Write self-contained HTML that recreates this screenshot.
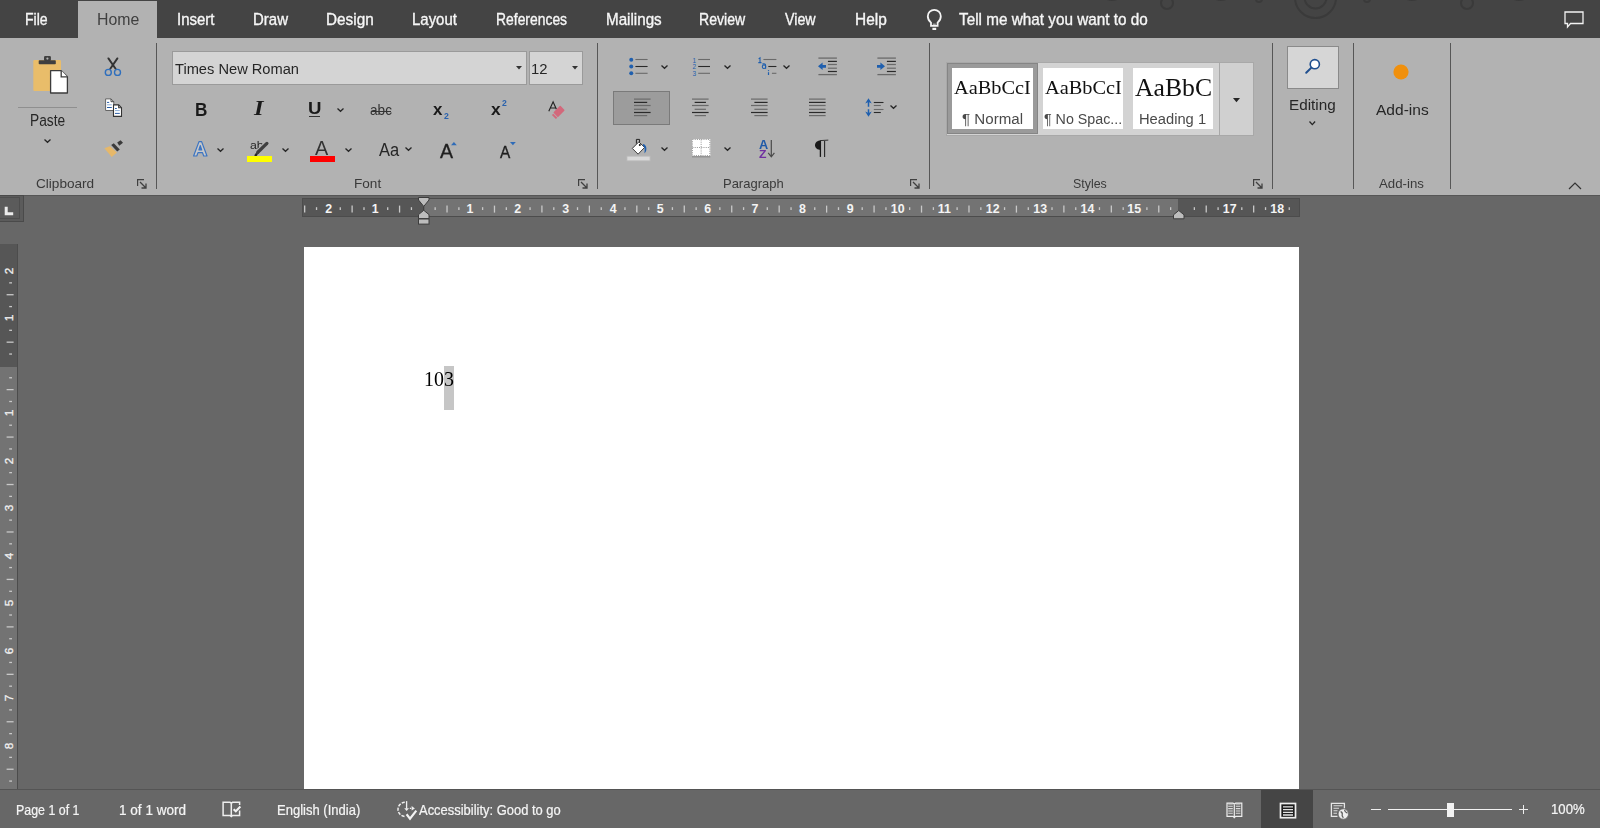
<!DOCTYPE html>
<html><head><meta charset="utf-8">
<style>
*{margin:0;padding:0;box-sizing:border-box}
html,body{width:1600px;height:828px;overflow:hidden;background:#676767;font-family:"Liberation Sans",sans-serif;position:relative}
.a{position:absolute;display:block}
svg.a{overflow:visible}
.t{position:absolute;white-space:nowrap;line-height:1}
</style></head><body>
<div class="a" style="left:0px;top:0px;width:1600px;height:38px;background:#444444"></div>
<svg class="a" style="left:1080px;top:0px;" width="460" height="30" viewBox="0 0 460 30"><circle cx="32" cy="-12" r="12" fill="none" stroke="#3a3a3a" stroke-width="2"/><circle cx="87" cy="3" r="6" fill="none" stroke="#3a3a3a" stroke-width="2"/><circle cx="141" cy="-12" r="12" fill="none" stroke="#3a3a3a" stroke-width="2"/><circle cx="179" cy="-1" r="3" fill="none" stroke="#3a3a3a" stroke-width="2"/><circle cx="235.5" cy="-2.5" r="20.5" fill="none" stroke="#3a3a3a" stroke-width="2"/><circle cx="235.5" cy="-2.5" r="11" fill="none" stroke="#3a3a3a" stroke-width="2"/><circle cx="287" cy="-1" r="3" fill="none" stroke="#3a3a3a" stroke-width="2"/><circle cx="332" cy="-12" r="12" fill="none" stroke="#3a3a3a" stroke-width="2"/><circle cx="387" cy="3" r="6" fill="none" stroke="#3a3a3a" stroke-width="2"/><circle cx="439" cy="-12" r="12" fill="none" stroke="#3a3a3a" stroke-width="2"/></svg>
<div class="a" style="left:78px;top:1px;width:79px;height:38px;background:#b2b2b2"></div>
<div class="t" id="tabFile" style="left:24.80px;top:12.41px;font-size:15.94px;color:#f6f6f6;font-family:'Liberation Sans',sans-serif;font-weight:normal;transform:scaleX(0.8824);transform-origin:0 0;-webkit-text-stroke:0.35px currentColor;">File</div>
<div class="t" id="tabHome" style="left:96.51px;top:12.41px;font-size:15.94px;color:#404040;font-family:'Liberation Sans',sans-serif;font-weight:normal;transform:scaleX(0.9949);transform-origin:0 0;">Home</div>
<div class="t" id="tabInsert" style="left:176.84px;top:12.41px;font-size:15.94px;color:#f6f6f6;font-family:'Liberation Sans',sans-serif;font-weight:normal;transform:scaleX(0.9400);transform-origin:0 0;-webkit-text-stroke:0.35px currentColor;">Insert</div>
<div class="t" id="tabDraw" style="left:253.02px;top:12.41px;font-size:15.94px;color:#f6f6f6;font-family:'Liberation Sans',sans-serif;font-weight:normal;transform:scaleX(0.9403);transform-origin:0 0;-webkit-text-stroke:0.35px currentColor;">Draw</div>
<div class="t" id="tabDesign" style="left:326.02px;top:12.41px;font-size:15.94px;color:#f6f6f6;font-family:'Liberation Sans',sans-serif;font-weight:normal;transform:scaleX(0.9623);transform-origin:0 0;-webkit-text-stroke:0.35px currentColor;">Design</div>
<div class="t" id="tabLayout" style="left:411.90px;top:12.41px;font-size:15.94px;color:#f6f6f6;font-family:'Liberation Sans',sans-serif;font-weight:normal;transform:scaleX(0.9383);transform-origin:0 0;-webkit-text-stroke:0.35px currentColor;">Layout</div>
<div class="t" id="tabReferences" style="left:495.52px;top:12.41px;font-size:15.94px;color:#f6f6f6;font-family:'Liberation Sans',sans-serif;font-weight:normal;transform:scaleX(0.8720);transform-origin:0 0;-webkit-text-stroke:0.35px currentColor;">References</div>
<div class="t" id="tabMailings" style="left:605.52px;top:12.41px;font-size:15.94px;color:#f6f6f6;font-family:'Liberation Sans',sans-serif;font-weight:normal;transform:scaleX(0.9529);transform-origin:0 0;-webkit-text-stroke:0.35px currentColor;">Mailings</div>
<div class="t" id="tabReview" style="left:699.22px;top:12.41px;font-size:15.94px;color:#f6f6f6;font-family:'Liberation Sans',sans-serif;font-weight:normal;transform:scaleX(0.8850);transform-origin:0 0;-webkit-text-stroke:0.35px currentColor;">Review</div>
<div class="t" id="tabView" style="left:784.71px;top:12.41px;font-size:15.94px;color:#f6f6f6;font-family:'Liberation Sans',sans-serif;font-weight:normal;transform:scaleX(0.8931);transform-origin:0 0;-webkit-text-stroke:0.35px currentColor;">View</div>
<div class="t" id="tabHelp" style="left:854.61px;top:12.41px;font-size:15.94px;color:#f6f6f6;font-family:'Liberation Sans',sans-serif;font-weight:normal;transform:scaleX(0.9698);transform-origin:0 0;-webkit-text-stroke:0.35px currentColor;">Help</div>
<div class="t" id="tell" style="left:958.92px;top:11.51px;font-size:15.94px;color:#f6f6f6;font-family:'Liberation Sans',sans-serif;font-weight:normal;transform:scaleX(0.9603);transform-origin:0 0;-webkit-text-stroke:0.35px currentColor;">Tell me what you want to do</div>
<svg class="a" style="left:926px;top:8px;" width="17" height="24" viewBox="0 0 17 24"><path d="M5,14.6 C2.9,12.9 1.8,10.6 1.8,8.2 C1.8,4.6 4.8,1.9 8.3,1.9 C11.8,1.9 14.8,4.6 14.8,8.2 C14.8,10.6 13.7,12.9 11.6,14.6 V17.8 H5 Z" fill="none" stroke="#f4f4f4" stroke-width="1.8"/><path d="M6.8,16.2 H9.8" stroke="#cfcfcf" stroke-width="1"/><path d="M6.4,20.9 H10.2" stroke="#f4f4f4" stroke-width="2.2"/></svg>
<svg class="a" style="left:1563.8px;top:11.2px;" width="20" height="17" viewBox="0 0 20 17"><path d="M1,1 H19 V12.5 H6.5 L3.5,16 V12.5 H1 Z" fill="none" stroke="#f2f2f2" stroke-width="1.3"/></svg>
<div class="a" style="left:0px;top:38px;width:1600px;height:157px;background:#b2b2b2"></div>
<div class="a" style="left:156px;top:43px;width:1px;height:146px;background:#575757"></div>
<div class="a" style="left:597px;top:43px;width:1px;height:146px;background:#575757"></div>
<div class="a" style="left:929px;top:43px;width:1px;height:146px;background:#575757"></div>
<div class="a" style="left:1272px;top:43px;width:1px;height:146px;background:#575757"></div>
<div class="a" style="left:1353px;top:43px;width:1px;height:146px;background:#575757"></div>
<div class="a" style="left:1450px;top:43px;width:1px;height:146px;background:#575757"></div>
<div class="t" id="lClip" style="left:35.56px;top:176.91px;font-size:13.33px;color:#3a3a3a;font-family:'Liberation Sans',sans-serif;font-weight:normal;transform:scaleX(1.0196);transform-origin:0 0;">Clipboard</div>
<div class="t" id="lFont" style="left:353.51px;top:176.91px;font-size:13.33px;color:#3a3a3a;font-family:'Liberation Sans',sans-serif;font-weight:normal;transform:scaleX(1.0182);transform-origin:0 0;">Font</div>
<div class="t" id="lPara" style="left:723.38px;top:176.91px;font-size:13.33px;color:#3a3a3a;font-family:'Liberation Sans',sans-serif;font-weight:normal;transform:scaleX(0.9736);transform-origin:0 0;">Paragraph</div>
<div class="t" id="lStyles" style="left:1072.75px;top:176.91px;font-size:13.33px;color:#3a3a3a;font-family:'Liberation Sans',sans-serif;font-weight:normal;transform:scaleX(0.9316);transform-origin:0 0;">Styles</div>
<div class="t" id="lAdd" style="left:1379.08px;top:176.91px;font-size:13.33px;color:#3a3a3a;font-family:'Liberation Sans',sans-serif;font-weight:normal;transform:scaleX(0.9936);transform-origin:0 0;">Add-ins</div>
<svg class="a" style="left:137px;top:179px;" width="10" height="10" viewBox="0 0 10 10"><path d="M0.6,7 V0.6 H7" fill="none" stroke="#404040" stroke-width="1.2"/><path d="M3,3 L9,9 M9,4.5 V9 H4.5" fill="none" stroke="#404040" stroke-width="1.3"/></svg>
<svg class="a" style="left:578px;top:179px;" width="10" height="10" viewBox="0 0 10 10"><path d="M0.6,7 V0.6 H7" fill="none" stroke="#404040" stroke-width="1.2"/><path d="M3,3 L9,9 M9,4.5 V9 H4.5" fill="none" stroke="#404040" stroke-width="1.3"/></svg>
<svg class="a" style="left:909.5px;top:179px;" width="10" height="10" viewBox="0 0 10 10"><path d="M0.6,7 V0.6 H7" fill="none" stroke="#404040" stroke-width="1.2"/><path d="M3,3 L9,9 M9,4.5 V9 H4.5" fill="none" stroke="#404040" stroke-width="1.3"/></svg>
<svg class="a" style="left:1253px;top:179px;" width="10" height="10" viewBox="0 0 10 10"><path d="M0.6,7 V0.6 H7" fill="none" stroke="#404040" stroke-width="1.2"/><path d="M3,3 L9,9 M9,4.5 V9 H4.5" fill="none" stroke="#404040" stroke-width="1.3"/></svg>
<svg class="a" style="left:1568px;top:182px;" width="14" height="8" viewBox="0 0 14 8"><polyline points="1,7 7,1 13,7" fill="none" stroke="#333" stroke-width="1.2"/></svg>
<svg class="a" style="left:28px;top:50px;" width="44" height="48" viewBox="0 0 44 48"><rect x="5.3" y="10" width="27.7" height="30.9" rx="1.2" fill="#e9bd6a"/><rect x="10.7" y="10.3" width="17.1" height="4" rx="0.8" fill="#3f3f3f"/><rect x="16" y="6" width="6.9" height="5" rx="1.2" fill="#3f3f3f"/><circle cx="19.4" cy="8.6" r="1.1" fill="#b3b3b3"/><path d="M22.6,20.6 H33.2 L39.4,26.8 V43 H22.6 Z" fill="#fff" stroke="#3c3c3c" stroke-width="1.3" stroke-linejoin="round"/><path d="M33.2,20.6 V26.8 H39.4" fill="#fff" stroke="#3c3c3c" stroke-width="1.3"/></svg>
<div class="a" style="left:18px;top:107px;width:59px;height:1px;background:#8f8f8f"></div>
<div class="t" id="paste" style="left:29.96px;top:112.75px;font-size:15.65px;color:#262626;font-family:'Liberation Sans',sans-serif;font-weight:normal;transform:scaleX(0.8776);transform-origin:0 0;">Paste</div>
<svg class="a" style="left:43px;top:137.5px;" width="9" height="5.5" viewBox="0 0 9 5.5"><polyline points="1.5,1.5 4.5,4.3 7.5,1.5" fill="none" stroke="#262626" stroke-width="1.3"/></svg>
<svg class="a" style="left:100px;top:52px;" width="28" height="28" viewBox="0 0 28 28"><path d="M8.4,6.4 L15.6,16.8" stroke="#333" stroke-width="1.9" stroke-linecap="round"/><path d="M17.4,6.4 L10.3,16.8" stroke="#333" stroke-width="1.9" stroke-linecap="round"/><circle cx="8.3" cy="20.4" r="3" fill="none" stroke="#2f6fbd" stroke-width="1.4"/><circle cx="17.5" cy="20.4" r="3" fill="none" stroke="#2f6fbd" stroke-width="1.4"/></svg>
<svg class="a" style="left:100px;top:94px;" width="28" height="28" viewBox="0 0 28 28"><path d="M5.6,4.9 H11 L13.8,7.7 V16.5 H5.6 Z" fill="#fff" stroke="#666" stroke-width="1"/><path d="M11,4.9 V7.7 H13.8" fill="none" stroke="#444" stroke-width="1"/><path d="M7,8.4 H9.2 M7,13.5 H11.8" stroke="#2a5fa8" stroke-width="1"/><path d="M7,10.8 H11.8" stroke="#8fb0d8" stroke-width="1"/><path d="M13.5,10.9 H18.7 L21.5,13.7 V22.4 H13.5 Z" fill="#fff" stroke="#333" stroke-width="1.1"/><path d="M18.7,10.9 V13.7 H21.5" fill="none" stroke="#333" stroke-width="1.1"/><path d="M15,14.5 H16.8 M15,19.4 H19.8" stroke="#2a5fa8" stroke-width="1"/><path d="M15,16.6 H19.8" stroke="#8fb0d8" stroke-width="1"/></svg>
<svg class="a" style="left:100px;top:134px;" width="28" height="28" viewBox="0 0 28 28"><polygon points="4.4,14.2 9.8,12.2 16.9,18.4 11.7,23" fill="#e6b86a"/><polygon points="11.2,10.9 13.8,9.2 19.8,15.4 17.2,17.4" fill="#3a3a3a"/><polygon points="17.2,8.6 20.6,6.2 23,8.8 19.2,11.8" fill="#3a3a3a"/></svg>
<div class="a" style="left:172px;top:50.8px;width:355px;height:33.8px;background:#d4d4d4;border:1px solid #9a9a9a"></div>
<div class="t" id="fontname" style="left:174.95px;top:60.92px;font-size:15.22px;color:#262626;font-family:'Liberation Sans',sans-serif;font-weight:normal;transform:scaleX(0.9627);transform-origin:0 0;">Times New Roman</div>
<svg class="a" style="left:515.5px;top:65.8px;" width="6" height="3.6" viewBox="0 0 6 3.6"><polygon points="0,0 6,0 3.0,3.6" fill="#333"/></svg>
<div class="a" style="left:529px;top:50.8px;width:54px;height:33.8px;background:#d4d4d4;border:1px solid #9a9a9a"></div>
<div class="t" id="fontsize" style="left:531.41px;top:60.92px;font-size:15.22px;color:#262626;font-family:'Liberation Sans',sans-serif;font-weight:normal;transform:scaleX(0.9745);transform-origin:0 0;">12</div>
<svg class="a" style="left:571.5px;top:65.8px;" width="6" height="3.6" viewBox="0 0 6 3.6"><polygon points="0,0 6,0 3.0,3.6" fill="#333"/></svg>
<div class="t" id="bB" style="left:194.54px;top:100.75px;font-size:18.84px;color:#1a1a1a;font-family:'Liberation Sans',sans-serif;font-weight:bold;transform:scaleX(0.9115);transform-origin:0 0;">B</div>
<div class="t" id="bI" style="left:254.07px;top:98.25px;font-size:20.00px;color:#1a1a1a;font-family:'Liberation Serif',serif;font-weight:bold;font-style:italic;transform:scaleX(1.2230);transform-origin:0 0;">I</div>
<div class="t" id="bU" style="left:307.71px;top:100.12px;font-size:17.10px;color:#1a1a1a;font-family:'Liberation Sans',sans-serif;font-weight:bold;transform:scaleX(1.0915);transform-origin:0 0;">U</div>
<div class="a" style="left:308.8px;top:115.8px;width:11.2px;height:1.4px;background:#333"></div>
<svg class="a" style="left:336.3px;top:107px;" width="9" height="5.5" viewBox="0 0 9 5.5"><polyline points="1.5,1.5 4.5,4.3 7.5,1.5" fill="none" stroke="#262626" stroke-width="1.3"/></svg>
<div class="t" id="babc" style="left:369.94px;top:101.60px;font-size:15.00px;color:#333;font-family:'Liberation Sans',sans-serif;font-weight:normal;transform:scaleX(0.9077);transform-origin:0 0;">abc</div>
<div class="a" style="left:370.5px;top:110.6px;width:20.5px;height:1.1px;background:#333"></div>
<div class="t" id="bx1" style="left:433.01px;top:100.61px;font-size:17.00px;color:#1a1a1a;font-family:'Liberation Sans',sans-serif;font-weight:bold;transform:scaleX(0.9976);transform-origin:0 0;">x</div>
<div class="t" id="bsub" style="left:444.16px;top:112.36px;font-size:8.55px;color:#2a62ad;font-family:'Liberation Sans',sans-serif;font-weight:bold;transform:scaleX(1.0185);transform-origin:0 0;">2</div>
<div class="t" id="bx2" style="left:490.61px;top:100.61px;font-size:17.00px;color:#1a1a1a;font-family:'Liberation Sans',sans-serif;font-weight:bold;transform:scaleX(1.0203);transform-origin:0 0;">x</div>
<div class="t" id="bsup" style="left:502.36px;top:98.84px;font-size:8.70px;color:#2a62ad;font-family:'Liberation Sans',sans-serif;font-weight:bold;transform:scaleX(0.9943);transform-origin:0 0;">2</div>
<svg class="a" style="left:544px;top:98px;" width="24" height="24" viewBox="0 0 24 24"><path d="M4.8,13.3 L9.1,3.8 L12.4,11.2 M6.3,10 H12" fill="none" stroke="#222" stroke-width="1.15"/><polygon points="10.3,14.6 16.2,8.6 19.8,12.2 13.9,18.3" fill="#d3687b" stroke="#d3687b" stroke-width="1.4" stroke-linejoin="round"/><line x1="8.6" y1="16.4" x2="12.6" y2="20.4" stroke="#d3687b" stroke-width="2"/></svg>
<svg class="a" style="left:192px;top:140px;" width="17" height="18" viewBox="0 0 17 18"><path d="M1.6,16 L7,1.6 H9.6 L15,16 H11.7 L10.5,12.6 H6 L4.8,16 Z M6.9,9.9 H9.7 L8.3,5.6 Z" fill="#c9c9c9" stroke="#3b74c2" stroke-width="1.2" stroke-linejoin="round"/><polygon points="7.2,9.6 9.4,9.6 8.3,6.2" fill="#3b74c2"/></svg>
<svg class="a" style="left:215.9px;top:146.5px;" width="9" height="5.5" viewBox="0 0 9 5.5"><polyline points="1.5,1.5 4.5,4.3 7.5,1.5" fill="none" stroke="#262626" stroke-width="1.3"/></svg>
<div class="t" id="hlab" style="left:249.58px;top:139.81px;font-size:11.80px;color:#262626;font-family:'Liberation Sans',sans-serif;font-weight:normal;transform:scaleX(1.0430);transform-origin:0 0;">ab</div>
<svg class="a" style="left:246px;top:140px;" width="28" height="24" viewBox="0 0 28 24"><path d="M11.5,12.6 L20.9,3.4" stroke="#b3b3b3" stroke-width="5.6" stroke-linecap="round"/><path d="M11.8,12.3 L20.9,3.4" stroke="#3f3f3f" stroke-width="3.3" stroke-linecap="round"/><path d="M9.4,15.2 L12.4,12" stroke="#3f3f3f" stroke-width="2.4"/><polygon points="8.2,15.8 10.2,13.6 11.5,14.9 9.6,16.4" fill="#222"/></svg>
<div class="a" style="left:246.8px;top:156px;width:25.3px;height:6.4px;background:#ffff00"></div>
<svg class="a" style="left:281px;top:147px;" width="9" height="5.5" viewBox="0 0 9 5.5"><polyline points="1.5,1.5 4.5,4.3 7.5,1.5" fill="none" stroke="#262626" stroke-width="1.3"/></svg>
<div class="t" id="fcA" style="left:314.84px;top:138.56px;font-size:19.42px;color:#333;font-family:'Liberation Sans',sans-serif;font-weight:normal;transform:scaleX(1.0226);transform-origin:0 0;">A</div>
<div class="a" style="left:309.9px;top:156.25px;width:24.7px;height:5.9px;background:#ff0000"></div>
<svg class="a" style="left:344px;top:147px;" width="9" height="5.5" viewBox="0 0 9 5.5"><polyline points="1.5,1.5 4.5,4.3 7.5,1.5" fill="none" stroke="#262626" stroke-width="1.3"/></svg>
<div class="t" id="Aa" style="left:378.83px;top:140.76px;font-size:18.12px;color:#262626;font-family:'Liberation Sans',sans-serif;font-weight:normal;transform:scaleX(0.9089);transform-origin:0 0;">Aa</div>
<svg class="a" style="left:403.5px;top:146px;" width="9" height="5.5" viewBox="0 0 9 5.5"><polyline points="1.5,1.5 4.5,4.3 7.5,1.5" fill="none" stroke="#262626" stroke-width="1.3"/></svg>
<div class="t" id="growA" style="left:440.13px;top:140.58px;font-size:20.58px;color:#1f1f1f;font-family:'Liberation Sans',sans-serif;font-weight:normal;transform:scaleX(0.9500);transform-origin:0 0;-webkit-text-stroke:0.35px currentColor;">A</div>
<svg class="a" style="left:451.2px;top:141.5px;" width="5.8" height="3.2" viewBox="0 0 5.8 3.2"><polygon points="0,3.2 5.8,3.2 2.9,0" fill="#2e6bb8"/></svg>
<div class="t" id="shrinkA" style="left:499.80px;top:143.52px;font-size:17.10px;color:#1f1f1f;font-family:'Liberation Sans',sans-serif;font-weight:normal;transform:scaleX(0.8990);transform-origin:0 0;-webkit-text-stroke:0.35px currentColor;">A</div>
<svg class="a" style="left:509.8px;top:141.5px;" width="5.8" height="3.2" viewBox="0 0 5.8 3.2"><polygon points="0,0 5.8,0 2.9,3.2" fill="#2e6bb8"/></svg>
<svg class="a" style="left:620px;top:50px;" width="30" height="30" viewBox="0 0 30 30"><circle cx="11.25" cy="9.799999999999997" r="2" fill="#1f5fae"/><circle cx="11.25" cy="16.5" r="2" fill="#1f5fae"/><circle cx="11.25" cy="23.299999999999997" r="2" fill="#1f5fae"/><line x1="15.4" y1="9.5" x2="27.6" y2="9.5" stroke="#6a6a6a" stroke-width="1.1"/><line x1="15.4" y1="16.5" x2="27.6" y2="16.5" stroke="#2a2a2a" stroke-width="1.1"/><line x1="15.4" y1="23.3" x2="27.6" y2="23.3" stroke="#6a6a6a" stroke-width="1.1"/></svg>
<svg class="a" style="left:660px;top:64.2px;" width="9" height="5.5" viewBox="0 0 9 5.5"><polyline points="1.5,1.5 4.5,4.3 7.5,1.5" fill="none" stroke="#262626" stroke-width="1.3"/></svg>
<svg class="a" style="left:690px;top:56px;" width="22" height="22" viewBox="0 0 22 22"><line x1="8.2" y1="3.5" x2="20" y2="3.5" stroke="#6a6a6a" stroke-width="1.1"/><line x1="8.2" y1="10.5" x2="20" y2="10.5" stroke="#2a2a2a" stroke-width="1.1"/><line x1="8.2" y1="17.3" x2="20" y2="17.3" stroke="#6a6a6a" stroke-width="1.1"/></svg>
<div class="t" id="num0" style="left:692.50px;top:57.90px;font-size:6.50px;color:#1f5fae;font-family:'Liberation Sans',sans-serif;font-weight:normal;">1</div>
<div class="t" id="num1" style="left:692.50px;top:63.90px;font-size:6.50px;color:#1f5fae;font-family:'Liberation Sans',sans-serif;font-weight:normal;">2</div>
<div class="t" id="num2" style="left:692.50px;top:71.40px;font-size:6.50px;color:#1f5fae;font-family:'Liberation Sans',sans-serif;font-weight:normal;">3</div>
<svg class="a" style="left:722.7px;top:64.2px;" width="9" height="5.5" viewBox="0 0 9 5.5"><polyline points="1.5,1.5 4.5,4.3 7.5,1.5" fill="none" stroke="#262626" stroke-width="1.3"/></svg>
<svg class="a" style="left:756px;top:56px;" width="22" height="22" viewBox="0 0 22 22"><line x1="7.4" y1="3.5" x2="20.4" y2="3.5" stroke="#6a6a6a" stroke-width="1.1"/><line x1="12.3" y1="10.5" x2="20.4" y2="10.5" stroke="#2a2a2a" stroke-width="1.1"/><line x1="15.9" y1="17.3" x2="20.4" y2="17.3" stroke="#6a6a6a" stroke-width="1.1"/></svg>
<svg class="a" style="left:756px;top:56.4px;" width="16" height="22" viewBox="0 0 16 22"><path d="M2.6,2.9 L4,1.9 V6.8 M2.3,6.6 H5.5" fill="none" stroke="#1f5fae" stroke-width="1.1"/><ellipse cx="8" cy="10.7" rx="1.7" ry="1.8" fill="none" stroke="#1f5fae" stroke-width="1.1"/><path d="M6.5,7.9 Q9.6,7.3 9.6,9.4 V12.8" fill="none" stroke="#1f5fae" stroke-width="1.1"/><circle cx="12.5" cy="14.6" r="0.7" fill="#1f5fae"/><path d="M12.5,16.2 V19" stroke="#1f5fae" stroke-width="1.2"/></svg>
<svg class="a" style="left:782.2px;top:63.8px;" width="9" height="5.5" viewBox="0 0 9 5.5"><polyline points="1.5,1.5 4.5,4.3 7.5,1.5" fill="none" stroke="#262626" stroke-width="1.3"/></svg>
<svg class="a" style="left:818px;top:50px;" width="20" height="28" viewBox="0 0 20 28"><line x1="0.4" y1="8.1" x2="18.9" y2="8.1" stroke="#6a6a6a" stroke-width="1.3"/><line x1="0.4" y1="24.6" x2="18.9" y2="24.6" stroke="#6a6a6a" stroke-width="1.3"/><line x1="9.9" y1="11.4" x2="18.9" y2="11.4" stroke="#2a2a2a" stroke-width="1.2"/><line x1="9.9" y1="14.5" x2="18.9" y2="14.5" stroke="#6a6a6a" stroke-width="1.2"/><line x1="9.9" y1="18.2" x2="18.9" y2="18.2" stroke="#6a6a6a" stroke-width="1.2"/><line x1="9.9" y1="21.5" x2="18.9" y2="21.5" stroke="#2a2a2a" stroke-width="1.2"/><path d="M0,16.35 L4.6,12.6 V15 H8 V17.7 H4.6 V20.1 Z" fill="#1f5fae"/></svg>
<svg class="a" style="left:877px;top:50px;" width="20" height="28" viewBox="0 0 20 28"><line x1="0.4" y1="8.1" x2="18.9" y2="8.1" stroke="#6a6a6a" stroke-width="1.3"/><line x1="0.4" y1="24.6" x2="18.9" y2="24.6" stroke="#6a6a6a" stroke-width="1.3"/><line x1="9.9" y1="11.4" x2="18.9" y2="11.4" stroke="#2a2a2a" stroke-width="1.2"/><line x1="9.9" y1="14.5" x2="18.9" y2="14.5" stroke="#6a6a6a" stroke-width="1.2"/><line x1="9.9" y1="18.2" x2="18.9" y2="18.2" stroke="#6a6a6a" stroke-width="1.2"/><line x1="9.9" y1="21.5" x2="18.9" y2="21.5" stroke="#2a2a2a" stroke-width="1.2"/><path d="M8,16.35 L3.4,12.6 V15 H0 V17.7 H3.4 V20.1 Z" fill="#1f5fae"/></svg>
<div class="a" style="left:613px;top:91px;width:57px;height:34px;background:#9c9c9c;border:1px solid #7a7a7a"></div>
<svg class="a" style="left:633.6px;top:96px;" width="16.6" height="22" viewBox="0 0 16.6 22"><line x1="0.00" y1="3.10" x2="16.60" y2="3.10" stroke="#6a6a6a" stroke-width="1.2"/><line x1="0.00" y1="6.40" x2="13.20" y2="6.40" stroke="#2a2a2a" stroke-width="1.2"/><line x1="0.00" y1="9.50" x2="16.60" y2="9.50" stroke="#6a6a6a" stroke-width="1.2"/><line x1="0.00" y1="13.30" x2="13.20" y2="13.30" stroke="#6a6a6a" stroke-width="1.2"/><line x1="0.00" y1="16.50" x2="16.60" y2="16.50" stroke="#2a2a2a" stroke-width="1.2"/><line x1="0.00" y1="19.60" x2="13.20" y2="19.60" stroke="#6a6a6a" stroke-width="1.2"/></svg>
<svg class="a" style="left:692.2px;top:96px;" width="16.6" height="22" viewBox="0 0 16.6 22"><line x1="0.00" y1="3.10" x2="16.60" y2="3.10" stroke="#6a6a6a" stroke-width="1.2"/><line x1="2.65" y1="6.40" x2="13.95" y2="6.40" stroke="#2a2a2a" stroke-width="1.2"/><line x1="0.00" y1="9.50" x2="16.60" y2="9.50" stroke="#6a6a6a" stroke-width="1.2"/><line x1="2.65" y1="13.30" x2="13.95" y2="13.30" stroke="#6a6a6a" stroke-width="1.2"/><line x1="0.00" y1="16.50" x2="16.60" y2="16.50" stroke="#2a2a2a" stroke-width="1.2"/><line x1="2.65" y1="19.60" x2="13.95" y2="19.60" stroke="#6a6a6a" stroke-width="1.2"/></svg>
<svg class="a" style="left:750.7px;top:96px;" width="16.6" height="22" viewBox="0 0 16.6 22"><line x1="0.00" y1="3.10" x2="16.60" y2="3.10" stroke="#6a6a6a" stroke-width="1.2"/><line x1="3.40" y1="6.40" x2="16.60" y2="6.40" stroke="#2a2a2a" stroke-width="1.2"/><line x1="0.00" y1="9.50" x2="16.60" y2="9.50" stroke="#6a6a6a" stroke-width="1.2"/><line x1="3.40" y1="13.30" x2="16.60" y2="13.30" stroke="#6a6a6a" stroke-width="1.2"/><line x1="0.00" y1="16.50" x2="16.60" y2="16.50" stroke="#2a2a2a" stroke-width="1.2"/><line x1="3.40" y1="19.60" x2="16.60" y2="19.60" stroke="#6a6a6a" stroke-width="1.2"/></svg>
<svg class="a" style="left:809.2px;top:96px;" width="16.6" height="22" viewBox="0 0 16.6 22"><line x1="0.00" y1="3.10" x2="16.60" y2="3.10" stroke="#6a6a6a" stroke-width="1.2"/><line x1="0.00" y1="6.40" x2="16.60" y2="6.40" stroke="#2a2a2a" stroke-width="1.2"/><line x1="0.00" y1="9.50" x2="16.60" y2="9.50" stroke="#6a6a6a" stroke-width="1.2"/><line x1="0.00" y1="13.30" x2="16.60" y2="13.30" stroke="#6a6a6a" stroke-width="1.2"/><line x1="0.00" y1="16.50" x2="16.60" y2="16.50" stroke="#2a2a2a" stroke-width="1.2"/><line x1="0.00" y1="19.60" x2="16.60" y2="19.60" stroke="#6a6a6a" stroke-width="1.2"/></svg>
<svg class="a" style="left:864px;top:98px;" width="21" height="20" viewBox="0 0 21 20"><path d="M1.2,5.6 L4.5,0.3 L7.8,5.6 L4.5,4 Z M1.2,13.4 L4.5,18.8 L7.8,13.4 L4.5,15 Z" fill="#1f5fae"/><path d="M4.5,2.5 V8.7 M4.5,11.2 V16.5" stroke="#1f5fae" stroke-width="1.5"/><line x1="9.8" y1="4.5" x2="19.5" y2="4.5" stroke="#2a2a2a" stroke-width="1.1"/><line x1="9.8" y1="7.5" x2="16.8" y2="7.5" stroke="#6a6a6a" stroke-width="1.1"/><line x1="9.8" y1="11.5" x2="19.5" y2="11.5" stroke="#6a6a6a" stroke-width="1.1"/><line x1="9.8" y1="14.5" x2="16.8" y2="14.5" stroke="#2a2a2a" stroke-width="1.1"/></svg>
<svg class="a" style="left:889.4px;top:104.3px;" width="9" height="5.5" viewBox="0 0 9 5.5"><polyline points="1.5,1.5 4.5,4.3 7.5,1.5" fill="none" stroke="#262626" stroke-width="1.3"/></svg>
<svg class="a" style="left:622px;top:134px;" width="30" height="30" viewBox="0 0 30 30"><path d="M10.3,14.4 L16.8,7.9 L22.6,13.4 L16.1,20.2 Z" fill="#fff" stroke="#3c3c3c" stroke-width="1"/><path d="M14.4,9.6 V5.4 H17.6 V8" fill="none" stroke="#222" stroke-width="1"/><circle cx="17.8" cy="11.1" r="1" fill="#111"/><path d="M21.2,10 C23.6,10.6 25,13.5 24.2,16.4 C23.8,17.8 23,18.8 22.5,19.3 C22.6,17.5 22.8,15 22.4,13.8 C22,12.6 21.3,11.7 20.8,11.4 Z" fill="#1f5fae"/><rect x="5" y="22.2" width="23" height="4.6" fill="#d9d9d9" stroke="#bdbdbd" stroke-width="0.8"/></svg>
<svg class="a" style="left:660px;top:146.1px;" width="9" height="5.5" viewBox="0 0 9 5.5"><polyline points="1.5,1.5 4.5,4.3 7.5,1.5" fill="none" stroke="#262626" stroke-width="1.3"/></svg>
<svg class="a" style="left:691.8px;top:139.2px;" width="18.3" height="19" viewBox="0 0 18.3 19"><rect x="0" y="0" width="18.3" height="17" fill="#fff"/><path d="M0.5,0.5 H17.8 V16.5 H0.5 Z M9.15,0.5 V16.5 M0.5,8.5 H17.8" fill="none" stroke="#8a8a8a" stroke-width="0.9" stroke-dasharray="1,1.2"/><line x1="0" y1="17.8" x2="18.3" y2="17.8" stroke="#8c8c8c" stroke-width="1.2"/></svg>
<svg class="a" style="left:722.8px;top:146.1px;" width="9" height="5.5" viewBox="0 0 9 5.5"><polyline points="1.5,1.5 4.5,4.3 7.5,1.5" fill="none" stroke="#262626" stroke-width="1.3"/></svg>
<div class="t" id="sortA" style="left:758.50px;top:139.03px;font-size:12.60px;color:#1e5aa8;font-family:'Liberation Sans',sans-serif;font-weight:bold;transform:scaleX(1.0115);transform-origin:0 0;">A</div>
<div class="t" id="sortZ" style="left:759.00px;top:149.33px;font-size:11.30px;color:#7030a0;font-family:'Liberation Sans',sans-serif;font-weight:bold;transform:scaleX(1.0860);transform-origin:0 0;">Z</div>
<svg class="a" style="left:767px;top:139px;" width="9" height="20" viewBox="0 0 9 20"><path d="M4.3,1 V17.6 M1.2,13.8 L4.3,17.8 L7.4,13.8" fill="none" stroke="#4a4a4a" stroke-width="1.2"/></svg>
<svg class="a" style="left:808px;top:136px;" width="24" height="24" viewBox="0 0 24 24"><path d="M12.9,4.5 C9.4,4.5 7,6.6 7,9.2 C7,11.8 9.4,13.9 12.9,13.9 Z" fill="#1a1a1a"/><path d="M12.4,4.8 V20.9" stroke="#1a1a1a" stroke-width="1.3"/><path d="M16.6,5 V20.9" stroke="#262626" stroke-width="1.1"/><path d="M12,4.6 L20.3,4.1" stroke="#333" stroke-width="1"/></svg>
<div class="a" style="left:945.5px;top:61.5px;width:274px;height:74px;background:#d3d3d3;border:1px solid #a8a8a8;border-right:none"></div>
<div class="a" style="left:947px;top:62.8px;width:90.6px;height:71px;background:#9a9a9a;border:1px solid #858585"></div>
<div class="a" style="left:951.8px;top:67.6px;width:81.2px;height:61.6px;background:#fff"></div>
<div class="a" style="left:1042.6px;top:67.6px;width:80.6px;height:61.6px;background:#fff"></div>
<div class="a" style="left:1132.8px;top:67.6px;width:80.6px;height:61.6px;background:#fff"></div>
<div class="a" style="left:1219.4px;top:61.5px;width:34.6px;height:74px;background:#d0d0d0;border:1px solid #a8a8a8"></div>
<svg class="a" style="left:1233px;top:98px;" width="7" height="4.2" viewBox="0 0 7 4.2"><polygon points="0,0 7,0 3.5,4.2" fill="#262626"/></svg>
<div class="t" id="sNormal" style="left:954.33px;top:78.18px;font-size:19.85px;color:#111;font-family:'Liberation Serif',serif;font-weight:normal;transform:scaleX(1.0257);transform-origin:0 0;">AaBbCcI</div>
<div class="t" id="sNoSp" style="left:1045.16px;top:78.18px;font-size:19.85px;color:#111;font-family:'Liberation Serif',serif;font-weight:normal;transform:scaleX(1.0254);transform-origin:0 0;">AaBbCcI</div>
<div class="t" id="sHead" style="left:1135.42px;top:74.77px;font-size:25.23px;color:#111;font-family:'Liberation Serif',serif;font-weight:normal;transform:scaleX(1.0191);transform-origin:0 0;">AaBbC</div>
<div class="t" id="lNormal" style="left:961.88px;top:110.92px;font-size:15.22px;color:#4a4a4a;font-family:'Liberation Sans',sans-serif;font-weight:normal;transform:scaleX(0.9928);transform-origin:0 0;">&para; Normal</div>
<div class="t" id="lNoSp" style="left:1043.62px;top:110.92px;font-size:15.22px;color:#4a4a4a;font-family:'Liberation Sans',sans-serif;font-weight:normal;transform:scaleX(0.9373);transform-origin:0 0;">&para; No Spac...</div>
<div class="t" id="lHead" style="left:1138.82px;top:110.80px;font-size:15.36px;color:#4a4a4a;font-family:'Liberation Sans',sans-serif;font-weight:normal;transform:scaleX(0.9576);transform-origin:0 0;">Heading 1</div>
<div class="a" style="left:1287.4px;top:46.2px;width:51.2px;height:42.5px;background:#d6d6d6;border:1.5px solid #8a8a8a"></div>
<svg class="a" style="left:1304px;top:58px;" width="18" height="19" viewBox="0 0 18 19"><circle cx="10.8" cy="6.2" r="4.6" fill="#fff" stroke="#1f4f8f" stroke-width="1.6"/><path d="M7.4,9.6 L2.2,14.8" stroke="#1f4f8f" stroke-width="2" stroke-linecap="round"/></svg>
<div class="t" id="editing" style="left:1288.51px;top:96.60px;font-size:15.36px;color:#262626;font-family:'Liberation Sans',sans-serif;font-weight:normal;transform:scaleX(0.9939);transform-origin:0 0;">Editing</div>
<svg class="a" style="left:1308.2px;top:120.2px;" width="8.6" height="5.8" viewBox="0 0 8.6 5.8"><polyline points="1.5,1.5 4.3,4.6 7.1,1.5" fill="none" stroke="#262626" stroke-width="1.3"/></svg>
<svg class="a" style="left:1390px;top:61px;" width="22" height="22" viewBox="0 0 22 22"><defs><filter id="bl" x="-30%" y="-30%" width="160%" height="160%"><feGaussianBlur stdDeviation="0.7"/></filter></defs><circle cx="11" cy="11" r="7.6" fill="#f0900e" filter="url(#bl)"/></svg>
<div class="t" id="addins" style="left:1375.95px;top:101.87px;font-size:15.51px;color:#262626;font-family:'Liberation Sans',sans-serif;font-weight:normal;transform:scaleX(1.0030);transform-origin:0 0;">Add-ins</div>
<div class="a" style="left:0px;top:195px;width:1600px;height:1.2px;background:#565656"></div>
<div class="a" style="left:0px;top:195px;width:24px;height:27px;background:#5b5b5b;border:1px solid #4a4a4a;border-left:none"></div>
<div class="a" style="left:0px;top:197.4px;width:19.8px;height:21.2px;border:1px solid #4e4e4e;border-left:none"></div>
<svg class="a" style="left:3.5px;top:205.5px;" width="10" height="10" viewBox="0 0 10 10"><path d="M2.2,0.8 V7.8 H9.2" fill="none" stroke="#ececec" stroke-width="3"/></svg>
<div class="a" style="left:302px;top:198px;width:998px;height:19.2px;background:#565656;border:1px solid #4c4c4c"></div>
<div class="a" style="left:423.7px;top:199px;width:754px;height:17.2px;background:#737373"></div>
<svg class="a" style="left:302px;top:196px;" width="998" height="24" viewBox="0 0 998 24"><line x1="2.68" y1="9.6" x2="2.68" y2="16.6" stroke="#c8c8c8" stroke-width="1.3"/><line x1="14.54" y1="11.2" x2="14.54" y2="14" stroke="#c8c8c8" stroke-width="1.3"/><line x1="38.26" y1="11.2" x2="38.26" y2="14" stroke="#c8c8c8" stroke-width="1.3"/><line x1="50.12" y1="9.6" x2="50.12" y2="16.6" stroke="#c8c8c8" stroke-width="1.3"/><line x1="61.99" y1="11.2" x2="61.99" y2="14" stroke="#c8c8c8" stroke-width="1.3"/><line x1="85.71" y1="11.2" x2="85.71" y2="14" stroke="#c8c8c8" stroke-width="1.3"/><line x1="97.57" y1="9.6" x2="97.57" y2="16.6" stroke="#c8c8c8" stroke-width="1.3"/><line x1="109.44" y1="11.2" x2="109.44" y2="14" stroke="#c8c8c8" stroke-width="1.3"/><line x1="133.16" y1="11.2" x2="133.16" y2="14" stroke="#c8c8c8" stroke-width="1.3"/><line x1="145.03" y1="9.6" x2="145.03" y2="16.6" stroke="#c8c8c8" stroke-width="1.3"/><line x1="156.89" y1="11.2" x2="156.89" y2="14" stroke="#c8c8c8" stroke-width="1.3"/><line x1="180.61" y1="11.2" x2="180.61" y2="14" stroke="#c8c8c8" stroke-width="1.3"/><line x1="192.48" y1="9.6" x2="192.48" y2="16.6" stroke="#c8c8c8" stroke-width="1.3"/><line x1="204.34" y1="11.2" x2="204.34" y2="14" stroke="#c8c8c8" stroke-width="1.3"/><line x1="228.06" y1="11.2" x2="228.06" y2="14" stroke="#c8c8c8" stroke-width="1.3"/><line x1="239.92" y1="9.6" x2="239.92" y2="16.6" stroke="#c8c8c8" stroke-width="1.3"/><line x1="251.79" y1="11.2" x2="251.79" y2="14" stroke="#c8c8c8" stroke-width="1.3"/><line x1="275.51" y1="11.2" x2="275.51" y2="14" stroke="#c8c8c8" stroke-width="1.3"/><line x1="287.38" y1="9.6" x2="287.38" y2="16.6" stroke="#c8c8c8" stroke-width="1.3"/><line x1="299.24" y1="11.2" x2="299.24" y2="14" stroke="#c8c8c8" stroke-width="1.3"/><line x1="322.96" y1="11.2" x2="322.96" y2="14" stroke="#c8c8c8" stroke-width="1.3"/><line x1="334.83" y1="9.6" x2="334.83" y2="16.6" stroke="#c8c8c8" stroke-width="1.3"/><line x1="346.69" y1="11.2" x2="346.69" y2="14" stroke="#c8c8c8" stroke-width="1.3"/><line x1="370.41" y1="11.2" x2="370.41" y2="14" stroke="#c8c8c8" stroke-width="1.3"/><line x1="382.28" y1="9.6" x2="382.28" y2="16.6" stroke="#c8c8c8" stroke-width="1.3"/><line x1="394.14" y1="11.2" x2="394.14" y2="14" stroke="#c8c8c8" stroke-width="1.3"/><line x1="417.86" y1="11.2" x2="417.86" y2="14" stroke="#c8c8c8" stroke-width="1.3"/><line x1="429.73" y1="9.6" x2="429.73" y2="16.6" stroke="#c8c8c8" stroke-width="1.3"/><line x1="441.59" y1="11.2" x2="441.59" y2="14" stroke="#c8c8c8" stroke-width="1.3"/><line x1="465.31" y1="11.2" x2="465.31" y2="14" stroke="#c8c8c8" stroke-width="1.3"/><line x1="477.17" y1="9.6" x2="477.17" y2="16.6" stroke="#c8c8c8" stroke-width="1.3"/><line x1="489.04" y1="11.2" x2="489.04" y2="14" stroke="#c8c8c8" stroke-width="1.3"/><line x1="512.76" y1="11.2" x2="512.76" y2="14" stroke="#c8c8c8" stroke-width="1.3"/><line x1="524.62" y1="9.6" x2="524.62" y2="16.6" stroke="#c8c8c8" stroke-width="1.3"/><line x1="536.49" y1="11.2" x2="536.49" y2="14" stroke="#c8c8c8" stroke-width="1.3"/><line x1="560.21" y1="11.2" x2="560.21" y2="14" stroke="#c8c8c8" stroke-width="1.3"/><line x1="572.08" y1="9.6" x2="572.08" y2="16.6" stroke="#c8c8c8" stroke-width="1.3"/><line x1="583.94" y1="11.2" x2="583.94" y2="14" stroke="#c8c8c8" stroke-width="1.3"/><line x1="607.66" y1="11.2" x2="607.66" y2="14" stroke="#c8c8c8" stroke-width="1.3"/><line x1="619.53" y1="9.6" x2="619.53" y2="16.6" stroke="#c8c8c8" stroke-width="1.3"/><line x1="631.39" y1="11.2" x2="631.39" y2="14" stroke="#c8c8c8" stroke-width="1.3"/><line x1="655.11" y1="11.2" x2="655.11" y2="14" stroke="#c8c8c8" stroke-width="1.3"/><line x1="666.98" y1="9.6" x2="666.98" y2="16.6" stroke="#c8c8c8" stroke-width="1.3"/><line x1="678.84" y1="11.2" x2="678.84" y2="14" stroke="#c8c8c8" stroke-width="1.3"/><line x1="702.56" y1="11.2" x2="702.56" y2="14" stroke="#c8c8c8" stroke-width="1.3"/><line x1="714.42" y1="9.6" x2="714.42" y2="16.6" stroke="#c8c8c8" stroke-width="1.3"/><line x1="726.29" y1="11.2" x2="726.29" y2="14" stroke="#c8c8c8" stroke-width="1.3"/><line x1="750.01" y1="11.2" x2="750.01" y2="14" stroke="#c8c8c8" stroke-width="1.3"/><line x1="761.88" y1="9.6" x2="761.88" y2="16.6" stroke="#c8c8c8" stroke-width="1.3"/><line x1="773.74" y1="11.2" x2="773.74" y2="14" stroke="#c8c8c8" stroke-width="1.3"/><line x1="797.46" y1="11.2" x2="797.46" y2="14" stroke="#c8c8c8" stroke-width="1.3"/><line x1="809.33" y1="9.6" x2="809.33" y2="16.6" stroke="#c8c8c8" stroke-width="1.3"/><line x1="821.19" y1="11.2" x2="821.19" y2="14" stroke="#c8c8c8" stroke-width="1.3"/><line x1="844.91" y1="11.2" x2="844.91" y2="14" stroke="#c8c8c8" stroke-width="1.3"/><line x1="856.78" y1="9.6" x2="856.78" y2="16.6" stroke="#c8c8c8" stroke-width="1.3"/><line x1="868.64" y1="11.2" x2="868.64" y2="14" stroke="#c8c8c8" stroke-width="1.3"/><line x1="892.36" y1="11.2" x2="892.36" y2="14" stroke="#c8c8c8" stroke-width="1.3"/><line x1="904.23" y1="9.6" x2="904.23" y2="16.6" stroke="#c8c8c8" stroke-width="1.3"/><line x1="916.09" y1="11.2" x2="916.09" y2="14" stroke="#c8c8c8" stroke-width="1.3"/><line x1="939.81" y1="11.2" x2="939.81" y2="14" stroke="#c8c8c8" stroke-width="1.3"/><line x1="951.67" y1="9.6" x2="951.67" y2="16.6" stroke="#c8c8c8" stroke-width="1.3"/><line x1="963.54" y1="11.2" x2="963.54" y2="14" stroke="#c8c8c8" stroke-width="1.3"/><line x1="987.26" y1="11.2" x2="987.26" y2="14" stroke="#c8c8c8" stroke-width="1.3"/></svg>
<div class="t" id="rh-2" style="left:325.13px;top:202.80px;font-size:12.40px;color:#f4f4f4;font-family:'Liberation Sans',sans-serif;font-weight:bold;">2</div>
<div class="t" id="rh-1" style="left:371.71px;top:202.80px;font-size:12.40px;color:#f4f4f4;font-family:'Liberation Sans',sans-serif;font-weight:bold;">1</div>
<div class="t" id="rh1" style="left:466.41px;top:202.80px;font-size:12.40px;color:#f4f4f4;font-family:'Liberation Sans',sans-serif;font-weight:bold;">1</div>
<div class="t" id="rh2" style="left:514.35px;top:202.80px;font-size:12.40px;color:#f4f4f4;font-family:'Liberation Sans',sans-serif;font-weight:bold;">2</div>
<div class="t" id="rh3" style="left:562.23px;top:202.80px;font-size:12.40px;color:#f4f4f4;font-family:'Liberation Sans',sans-serif;font-weight:bold;">3</div>
<div class="t" id="rh4" style="left:609.74px;top:202.80px;font-size:12.40px;color:#f4f4f4;font-family:'Liberation Sans',sans-serif;font-weight:bold;">4</div>
<div class="t" id="rh5" style="left:656.69px;top:202.80px;font-size:12.40px;color:#f4f4f4;font-family:'Liberation Sans',sans-serif;font-weight:bold;">5</div>
<div class="t" id="rh6" style="left:704.36px;top:202.80px;font-size:12.40px;color:#f4f4f4;font-family:'Liberation Sans',sans-serif;font-weight:bold;">6</div>
<div class="t" id="rh7" style="left:751.60px;top:202.80px;font-size:12.40px;color:#f4f4f4;font-family:'Liberation Sans',sans-serif;font-weight:bold;">7</div>
<div class="t" id="rh8" style="left:799.01px;top:202.80px;font-size:12.40px;color:#f4f4f4;font-family:'Liberation Sans',sans-serif;font-weight:bold;">8</div>
<div class="t" id="rh9" style="left:846.75px;top:202.80px;font-size:12.40px;color:#f4f4f4;font-family:'Liberation Sans',sans-serif;font-weight:bold;">9</div>
<div class="t" id="rh10" style="left:890.75px;top:202.80px;font-size:12.40px;color:#f4f4f4;font-family:'Liberation Sans',sans-serif;font-weight:bold;">10</div>
<div class="t" id="rh11" style="left:937.80px;top:202.80px;font-size:12.40px;color:#f4f4f4;font-family:'Liberation Sans',sans-serif;font-weight:bold;">11</div>
<div class="t" id="rh12" style="left:985.76px;top:202.80px;font-size:12.40px;color:#f4f4f4;font-family:'Liberation Sans',sans-serif;font-weight:bold;">12</div>
<div class="t" id="rh13" style="left:1033.32px;top:202.80px;font-size:12.40px;color:#f4f4f4;font-family:'Liberation Sans',sans-serif;font-weight:bold;">13</div>
<div class="t" id="rh14" style="left:1080.49px;top:202.80px;font-size:12.40px;color:#f4f4f4;font-family:'Liberation Sans',sans-serif;font-weight:bold;">14</div>
<div class="t" id="rh15" style="left:1127.30px;top:202.80px;font-size:12.40px;color:#f4f4f4;font-family:'Liberation Sans',sans-serif;font-weight:bold;">15</div>
<div class="t" id="rh17" style="left:1222.79px;top:202.80px;font-size:12.40px;color:#f4f4f4;font-family:'Liberation Sans',sans-serif;font-weight:bold;">17</div>
<div class="t" id="rh18" style="left:1270.35px;top:202.80px;font-size:12.40px;color:#f4f4f4;font-family:'Liberation Sans',sans-serif;font-weight:bold;">18</div>
<svg class="a" style="left:418px;top:196.5px;" width="11.5" height="28" viewBox="0 0 11.5 28"><path d="M0.5,0.5 H11 V3 L5.75,9.4 L0.5,3 Z" fill="#bdbdbd" stroke="#3c3c3c" stroke-width="1"/><path d="M5.75,9.4 V13.3" stroke="#3c3c3c" stroke-width="1"/><path d="M5.75,13.3 L11,17.6 V21.6 H0.5 V17.6 Z" fill="#bdbdbd" stroke="#3c3c3c" stroke-width="1"/><rect x="0.5" y="22" width="10.5" height="5.1" fill="#bdbdbd" stroke="#3c3c3c" stroke-width="1"/></svg>
<svg class="a" style="left:1172.75px;top:209.5px;" width="11.5" height="10" viewBox="0 0 11.5 10"><path d="M5.75,0.5 L11,4.8 V8.8 H0.5 V4.8 Z" fill="#bdbdbd" stroke="#3c3c3c" stroke-width="1"/></svg>
<div class="a" style="left:0px;top:244px;width:18px;height:546px;background:#737373;border-right:1px solid #4c4c4c"></div>
<div class="a" style="left:0px;top:244px;width:18px;height:123px;background:#565656;border-right:1px solid #4c4c4c"></div>
<svg class="a" style="left:0px;top:244px;" width="18" height="546" viewBox="0 0 18 546"><line x1="9.2" y1="38.86" x2="12" y2="38.86" stroke="#c8c8c8" stroke-width="1.3"/><line x1="6.6" y1="50.72" x2="13.6" y2="50.72" stroke="#c8c8c8" stroke-width="1.3"/><line x1="9.2" y1="62.59" x2="12" y2="62.59" stroke="#c8c8c8" stroke-width="1.3"/><line x1="9.2" y1="86.31" x2="12" y2="86.31" stroke="#c8c8c8" stroke-width="1.3"/><line x1="6.6" y1="98.17" x2="13.6" y2="98.17" stroke="#c8c8c8" stroke-width="1.3"/><line x1="9.2" y1="110.04" x2="12" y2="110.04" stroke="#c8c8c8" stroke-width="1.3"/><line x1="9.2" y1="133.76" x2="12" y2="133.76" stroke="#c8c8c8" stroke-width="1.3"/><line x1="6.6" y1="145.62" x2="13.6" y2="145.62" stroke="#c8c8c8" stroke-width="1.3"/><line x1="9.2" y1="157.49" x2="12" y2="157.49" stroke="#c8c8c8" stroke-width="1.3"/><line x1="9.2" y1="181.21" x2="12" y2="181.21" stroke="#c8c8c8" stroke-width="1.3"/><line x1="6.6" y1="193.07" x2="13.6" y2="193.07" stroke="#c8c8c8" stroke-width="1.3"/><line x1="9.2" y1="204.94" x2="12" y2="204.94" stroke="#c8c8c8" stroke-width="1.3"/><line x1="9.2" y1="228.66" x2="12" y2="228.66" stroke="#c8c8c8" stroke-width="1.3"/><line x1="6.6" y1="240.52" x2="13.6" y2="240.52" stroke="#c8c8c8" stroke-width="1.3"/><line x1="9.2" y1="252.39" x2="12" y2="252.39" stroke="#c8c8c8" stroke-width="1.3"/><line x1="9.2" y1="276.11" x2="12" y2="276.11" stroke="#c8c8c8" stroke-width="1.3"/><line x1="6.6" y1="287.98" x2="13.6" y2="287.98" stroke="#c8c8c8" stroke-width="1.3"/><line x1="9.2" y1="299.84" x2="12" y2="299.84" stroke="#c8c8c8" stroke-width="1.3"/><line x1="9.2" y1="323.56" x2="12" y2="323.56" stroke="#c8c8c8" stroke-width="1.3"/><line x1="6.6" y1="335.42" x2="13.6" y2="335.42" stroke="#c8c8c8" stroke-width="1.3"/><line x1="9.2" y1="347.29" x2="12" y2="347.29" stroke="#c8c8c8" stroke-width="1.3"/><line x1="9.2" y1="371.01" x2="12" y2="371.01" stroke="#c8c8c8" stroke-width="1.3"/><line x1="6.6" y1="382.88" x2="13.6" y2="382.88" stroke="#c8c8c8" stroke-width="1.3"/><line x1="9.2" y1="394.74" x2="12" y2="394.74" stroke="#c8c8c8" stroke-width="1.3"/><line x1="9.2" y1="418.46" x2="12" y2="418.46" stroke="#c8c8c8" stroke-width="1.3"/><line x1="6.6" y1="430.33" x2="13.6" y2="430.33" stroke="#c8c8c8" stroke-width="1.3"/><line x1="9.2" y1="442.19" x2="12" y2="442.19" stroke="#c8c8c8" stroke-width="1.3"/><line x1="9.2" y1="465.91" x2="12" y2="465.91" stroke="#c8c8c8" stroke-width="1.3"/><line x1="6.6" y1="477.77" x2="13.6" y2="477.77" stroke="#c8c8c8" stroke-width="1.3"/><line x1="9.2" y1="489.64" x2="12" y2="489.64" stroke="#c8c8c8" stroke-width="1.3"/><line x1="9.2" y1="513.36" x2="12" y2="513.36" stroke="#c8c8c8" stroke-width="1.3"/><line x1="6.6" y1="525.23" x2="13.6" y2="525.23" stroke="#c8c8c8" stroke-width="1.3"/><line x1="9.2" y1="537.09" x2="12" y2="537.09" stroke="#c8c8c8" stroke-width="1.3"/></svg>
<div class="t" style="left:2px;top:265.00px;width:14px;height:12px;font-size:11.8px;line-height:12px;text-align:center;color:#f0f0f0;font-weight:normal;-webkit-text-stroke:0.3px #f0f0f0;transform:rotate(-90deg)">2</div>
<div class="t" style="left:2px;top:312.45px;width:14px;height:12px;font-size:11.8px;line-height:12px;text-align:center;color:#f0f0f0;font-weight:normal;-webkit-text-stroke:0.3px #f0f0f0;transform:rotate(-90deg)">1</div>
<div class="t" style="left:2px;top:407.35px;width:14px;height:12px;font-size:11.8px;line-height:12px;text-align:center;color:#f0f0f0;font-weight:normal;-webkit-text-stroke:0.3px #f0f0f0;transform:rotate(-90deg)">1</div>
<div class="t" style="left:2px;top:454.80px;width:14px;height:12px;font-size:11.8px;line-height:12px;text-align:center;color:#f0f0f0;font-weight:normal;-webkit-text-stroke:0.3px #f0f0f0;transform:rotate(-90deg)">2</div>
<div class="t" style="left:2px;top:502.25px;width:14px;height:12px;font-size:11.8px;line-height:12px;text-align:center;color:#f0f0f0;font-weight:normal;-webkit-text-stroke:0.3px #f0f0f0;transform:rotate(-90deg)">3</div>
<div class="t" style="left:2px;top:549.70px;width:14px;height:12px;font-size:11.8px;line-height:12px;text-align:center;color:#f0f0f0;font-weight:normal;-webkit-text-stroke:0.3px #f0f0f0;transform:rotate(-90deg)">4</div>
<div class="t" style="left:2px;top:597.15px;width:14px;height:12px;font-size:11.8px;line-height:12px;text-align:center;color:#f0f0f0;font-weight:normal;-webkit-text-stroke:0.3px #f0f0f0;transform:rotate(-90deg)">5</div>
<div class="t" style="left:2px;top:644.60px;width:14px;height:12px;font-size:11.8px;line-height:12px;text-align:center;color:#f0f0f0;font-weight:normal;-webkit-text-stroke:0.3px #f0f0f0;transform:rotate(-90deg)">6</div>
<div class="t" style="left:2px;top:692.05px;width:14px;height:12px;font-size:11.8px;line-height:12px;text-align:center;color:#f0f0f0;font-weight:normal;-webkit-text-stroke:0.3px #f0f0f0;transform:rotate(-90deg)">7</div>
<div class="t" style="left:2px;top:739.50px;width:14px;height:12px;font-size:11.8px;line-height:12px;text-align:center;color:#f0f0f0;font-weight:normal;-webkit-text-stroke:0.3px #f0f0f0;transform:rotate(-90deg)">8</div>
<div class="a" style="left:304.1px;top:247px;width:995px;height:542.6px;background:#fff"></div>
<div class="a" style="left:444.25px;top:366.3px;width:9.9px;height:43.4px;background:#c6c6c6"></div>
<div class="t" id="doc103" style="left:423.96px;top:368.55px;font-size:21.08px;color:#000;font-family:'Liberation Serif',serif;font-weight:normal;transform:scaleX(0.9440);transform-origin:0 0;">103</div>
<div class="a" style="left:0px;top:789.2px;width:1600px;height:39px;background:#676767;border-top:1.6px solid #545454"></div>
<div class="t" id="stPage" style="left:15.84px;top:803.06px;font-size:13.99px;color:#f4f4f4;font-family:'Liberation Sans',sans-serif;font-weight:normal;transform:scaleX(0.8872);transform-origin:0 0;-webkit-text-stroke:0.22px currentColor;">Page 1 of 1</div>
<div class="t" id="stWord" style="left:118.89px;top:803.06px;font-size:13.99px;color:#f4f4f4;font-family:'Liberation Sans',sans-serif;font-weight:normal;transform:scaleX(0.9698);transform-origin:0 0;-webkit-text-stroke:0.22px currentColor;">1 of 1 word</div>
<svg class="a" style="left:218px;top:798px;" width="28" height="24" viewBox="0 0 28 24"><path d="M13.3,5.4 L12,4.2 H5.1 V17.4 H12 L13.3,18.6 L14.6,17.4 H21.6 V12.6 M21.6,7 V4.2 H14.6 L13.3,5.4 V18.6" fill="none" stroke="#eee" stroke-width="1.5"/><path d="M15.6,11.2 L17.8,13.2 L22.4,8.6" fill="none" stroke="#f2f2f2" stroke-width="2.1"/></svg>
<div class="t" id="stEng" style="left:277.27px;top:803.06px;font-size:13.99px;color:#f4f4f4;font-family:'Liberation Sans',sans-serif;font-weight:normal;transform:scaleX(0.9315);transform-origin:0 0;-webkit-text-stroke:0.22px currentColor;">English (India)</div>
<svg class="a" style="left:394px;top:798px;" width="26" height="26" viewBox="0 0 26 26"><path d="M10.8,4.3 A7,7 0 0 0 11.3,18.4" fill="none" stroke="#eee" stroke-width="1.5" stroke-dasharray="3.2,1.3"/><path d="M12.6,3.1 V10.6" stroke="#eee" stroke-width="1.3"/><polygon points="10.2,10.2 15,10.2 12.6,12.9" fill="#eee"/><path d="M15.8,10.4 H17.2 M18,10.4 H19" stroke="#eee" stroke-width="1.3"/><polygon points="17.6,8 20.9,10.4 17.6,12.6" fill="#eee"/><path d="M12.6,16.3 L16,20.6 L22.3,12.6" fill="none" stroke="#f2f2f2" stroke-width="2.2"/></svg>
<div class="t" id="stAcc" style="left:419.44px;top:803.06px;font-size:13.99px;color:#f4f4f4;font-family:'Liberation Sans',sans-serif;font-weight:normal;transform:scaleX(0.9258);transform-origin:0 0;-webkit-text-stroke:0.22px currentColor;">Accessibility: Good to go</div>
<div class="a" style="left:1261.25px;top:790px;width:51.75px;height:38px;background:#454545"></div>
<svg class="a" style="left:1226px;top:802px;" width="17" height="17" viewBox="0 0 17 17"><path d="M1,1.2 H7 L8.3,2.2 L9.6,1.2 H15.8 V14.4 H9.6 L8.3,15.6 L7,14.4 H1 Z M8.3,2.2 V16.2" fill="none" stroke="#eee" stroke-width="1.2"/><path d="M2.2,2.0 H6.8 M9.8,2.0 H14.4" stroke="#dcdcdc" stroke-width="1.1"/><path d="M2.2,4.3 H6.8 M9.8,4.3 H14.4" stroke="#dcdcdc" stroke-width="1.1"/><path d="M2.2,6.6 H6.8 M9.8,6.6 H14.4" stroke="#dcdcdc" stroke-width="1.1"/><path d="M2.2,9.0 H6.8 M9.8,9.0 H14.4" stroke="#dcdcdc" stroke-width="1.1"/><path d="M2.2,11.3 H6.8 M9.8,11.3 H14.4" stroke="#dcdcdc" stroke-width="1.1"/></svg>
<svg class="a" style="left:1278.5px;top:802px;" width="18" height="17" viewBox="0 0 18 17"><rect x="1.5" y="1.5" width="15" height="14.2" fill="#1c1c1c" stroke="#eee" stroke-width="1.7"/><path d="M4,4.9 H14 M4,7.6 H14 M4,10.3 H14 M4,13 H14" stroke="#e4e4e4" stroke-width="1.3"/></svg>
<svg class="a" style="left:1330px;top:802px;" width="20" height="19" viewBox="0 0 20 19"><path d="M14.4,6.5 V1.4 H1.4 V14.4 H7.5" fill="none" stroke="#e6e6e6" stroke-width="1.3"/><path d="M3.5,3.7 H12.5 M3.5,6.2 H9 M3.5,8.7 H7.5 M3.5,11.2 H7" stroke="#dcdcdc" stroke-width="1.1"/><circle cx="13.3" cy="12" r="5.2" fill="#eee" stroke="#686868" stroke-width="0.8"/><path d="M10.6,9.6 Q12.6,10.2 12.2,12.4 Q11.6,14 13.4,15.8 M14.6,8 Q14.8,10.2 17.4,11.2" fill="none" stroke="#5a5a5a" stroke-width="1.3"/></svg>
<div class="a" style="left:1371.25px;top:808.7px;width:9.5px;height:1.3px;background:#eee"></div>
<div class="a" style="left:1388px;top:808.6px;width:124px;height:1.7px;background:#f2f2f2"></div>
<div class="a" style="left:1447px;top:802.5px;width:7.25px;height:14.5px;background:#f2f2f2"></div>
<div class="a" style="left:1518.75px;top:808.7px;width:9.5px;height:1.3px;background:#eee"></div>
<div class="a" style="left:1522.9px;top:804.5px;width:1.3px;height:9.7px;background:#eee"></div>
<div class="t" id="stZoom" style="left:1551.04px;top:802.85px;font-size:13.77px;color:#f4f4f4;font-family:'Liberation Sans',sans-serif;font-weight:normal;transform:scaleX(0.9564);transform-origin:0 0;-webkit-text-stroke:0.22px currentColor;">100%</div>
</body></html>
